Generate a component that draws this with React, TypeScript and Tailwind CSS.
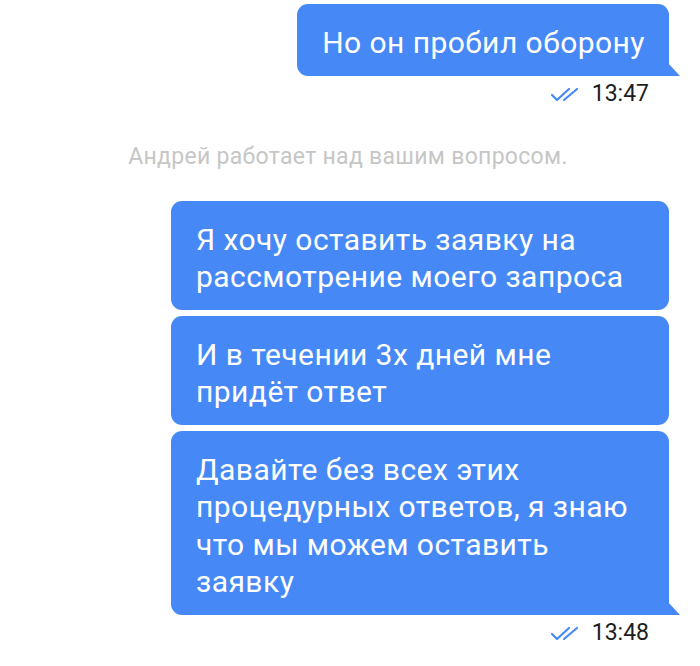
import React from "react";

const font = { fontFamily: "Roboto, 'Noto Sans', sans-serif" };

function Checks() {
  return (
    <svg width="30" height="16" viewBox="0 0 30 16" fill="none" stroke="#4689f6" strokeWidth="2.2" strokeLinecap="round" strokeLinejoin="round">
      <path d="M2 9 L7 14 L19 3" />
      <path d="M14 14 L27 3" />
    </svg>
  );
}

function Bubble({ text, tail, wide }: { text: string; tail?: boolean; wide?: boolean }) {
  return (
    <div className="relative">
      <div
        className={
          "bg-[#4689f6] text-white text-[30px] tracking-[0.45px] leading-[37.5px] pt-[20px] pb-[14px] pl-[25px] pr-[24px] " +
          (wide ? "w-[498px] " : "") +
          (tail ? "rounded-tl-[11px] rounded-tr-[11px] rounded-bl-[11px] rounded-br-none" : "rounded-[11px]")
        }
      >
        {text}
      </div>
      {tail && (
        <svg className="absolute bottom-0 right-[-11px]" width="12" height="13" viewBox="0 0 12 13">
          <path d="M0 0 L12 13 L0 13 Z" fill="#4689f6" />
        </svg>
      )}
    </div>
  );
}

function Time({ t }: { t: string }) {
  return (
    <div className="flex items-center justify-end gap-[12px] pr-[51px] text-[23px] leading-[28px] text-[#1d1d1d]">
      <Checks />
      <span>{t}</span>
    </div>
  );
}

export default function App() {
  return (
    <div className="w-[700px] h-[666px] bg-white overflow-hidden pt-[4px]" style={font}>
      <div className="flex flex-col items-end pr-[31px]">
        <Bubble text="Но он пробил оборону" tail />
      </div>
      <div className="mt-[4px]">
        <Time t="13:47" />
      </div>
      <div className="text-center text-[23px] tracking-[0.3px] leading-[28px] text-[#c6c6c6] mt-[35px] pr-[4px]">
        Андрей работает над вашим вопросом.
      </div>
      <div className="flex flex-col items-end gap-[6px] pr-[31px] mt-[30px]">
        <Bubble wide text="Я хочу оставить заявку на рассмотрение моего запроса" />
        <Bubble wide text="И в течении 3х дней мне придёт ответ" />
        <Bubble wide tail text="Давайте без всех этих процедурных ответов, я знаю что мы можем оставить заявку" />
      </div>
      <div className="mt-[4px]">
        <Time t="13:48" />
      </div>
    </div>
  );
}
